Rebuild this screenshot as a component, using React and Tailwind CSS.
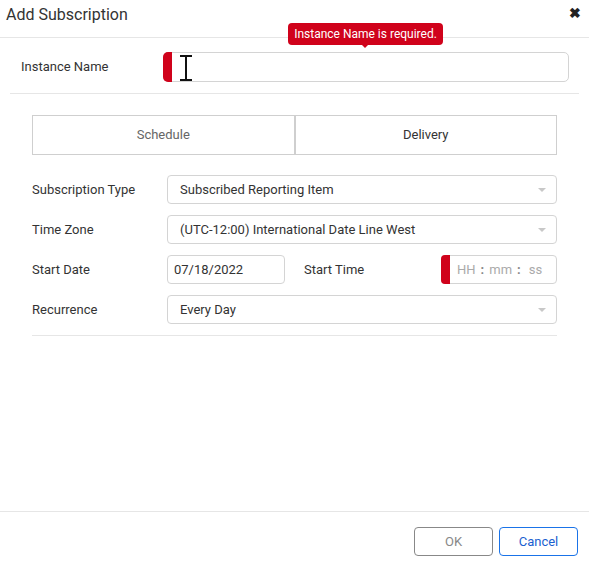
import React from 'react';

const font = { fontFamily: 'Roboto, "Liberation Sans", sans-serif' };

const Caret = () => (
  <svg width="8" height="6" viewBox="0 0 8 6" className="fill-[#c8c8c8]">
    <path d="M0 1h8L4 5z" />
  </svg>
);

const SelectBox = ({ value }) => (
  <div className="flex h-[29px] w-[390px] items-center justify-between rounded-[4px] border border-[#d4d4d4] bg-white pl-[12px] pr-[10px] text-[13px] text-[#333]">
    <span>{value}</span>
    <Caret />
  </div>
);

const Row = ({ label, children }) => (
  <div className="flex h-[29px] items-center">
    <div className="w-[135px] text-[13px] text-[#333]">{label}</div>
    {children}
  </div>
);

const IBeam = () => (
  <svg width="14" height="26" viewBox="0 0 14 26" className="absolute left-[15px] top-[2px]">
    <path d="M1 1h12M1 25h12M7 1v24" stroke="#111" strokeWidth="2" fill="none" />
  </svg>
);

export default function App() {
  return (
    <div style={font} className="relative flex h-[563px] w-[589px] flex-col bg-white">
      {/* header */}
      <div className="flex h-[38px] items-start justify-between border-b border-[#e6e6e6] pl-[6px] pr-[8px] pt-[5px]">
        <span className="text-[16px] leading-[20px] text-[#333]">Add Subscription</span>
        <span className="mt-[1px] text-[14px] font-bold leading-none text-[#222]">✖</span>
      </div>

      {/* instance name */}
      <div className="mx-[10px] flex h-[56px] items-center border-b border-[#e6e6e6] pl-[11px] pt-[3px]">
        <div className="w-[142px] text-[13px] text-[#333]">Instance Name</div>
        <div className="relative flex h-[30px] w-[406px] rounded-[5px] border border-[#d4d4d4] bg-white">
          <div className="-my-px -ml-px w-[9px] rounded-l-[5px] bg-[#d0021b]" />
          <IBeam />
        </div>
      </div>

      {/* validation tooltip */}
      <div className="absolute left-[288px] top-[23px] flex h-[22px] w-[155px] items-center justify-center rounded-[4px] bg-[#d0021b] text-[12px] text-white">
        Instance Name is required.
        <div className="absolute left-[73px] top-[21px] h-0 w-0 border-x-[4px] border-t-[4px] border-x-transparent border-t-[#d0021b]" />
      </div>

      {/* body */}
      <div className="flex flex-1 flex-col px-[32px] pt-[21px]">
        <div className="flex h-[40px] w-[525px] border border-[#cfcfcf] text-[13px]">
          <div className="flex flex-1 items-center justify-center border-r-2 border-[#cfcfcf] text-[#666]">Schedule</div>
          <div className="flex flex-1 items-center justify-center text-[#333]">Delivery</div>
        </div>

        <div className="mt-[20px] flex w-[525px] flex-col gap-[11px] border-b border-[#e6e6e6] pb-[11px]">
          <Row label="Subscription Type">
            <SelectBox value="Subscribed Reporting Item" />
          </Row>
          <Row label="Time Zone">
            <SelectBox value="(UTC-12:00) International Date Line West" />
          </Row>
          <Row label="Start Date">
            <div className="flex h-[29px] w-[118px] items-center rounded-[4px] border border-[#d4d4d4] pl-[6px] text-[13px] text-[#333]">
              07/18/2022
            </div>
            <div className="ml-[19px] w-[137px] text-[13px] text-[#333]">Start Time</div>
            <div className="flex h-[29px] w-[116px] rounded-[4px] border border-[#d4d4d4] text-[13px] text-[#aaa]">
              <div className="-my-px -ml-px w-[9px] rounded-l-[4px] bg-[#d0021b]" />
              <div className="flex flex-1 items-center pl-[7px]">
                <span>HH</span>
                <span className="mx-[5px] font-bold text-[#888]">:</span>
                <span>mm</span>
                <span className="mx-[5px] font-bold text-[#888]">:</span>
                <span className="ml-[3px]">ss</span>
              </div>
            </div>
          </Row>
          <Row label="Recurrence">
            <SelectBox value="Every Day" />
          </Row>
        </div>
      </div>

      {/* footer */}
      <div className="flex h-[52px] items-start justify-end gap-[6px] border-t border-[#e6e6e6] pr-[11px] pt-[15px]">
        <button className="h-[29px] w-[79px] rounded-[4px] border border-[#888] text-[13px] text-[#888]">OK</button>
        <button className="h-[29px] w-[79px] rounded-[4px] border border-[#1a73e8] text-[13px] text-[#1a5fd0]">Cancel</button>
      </div>
    </div>
  );
}
